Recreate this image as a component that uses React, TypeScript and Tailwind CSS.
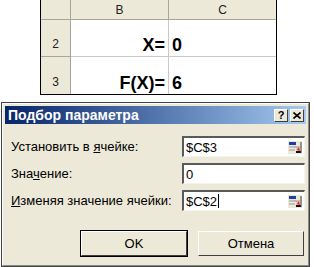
export default function App() {
  return (
    <div className="w-[314px] h-[267px] bg-white overflow-hidden font-['Liberation_Sans',Arial,sans-serif]">
      <Sheet />
      <ParamDialog />
    </div>
  );
}

function Sheet() {
  const head = "bg-[#ece9d8] border-r border-b border-[#a7a69b] text-[12px] text-[#222] flex";
  const cell = "border-r border-b border-[#c9c9c9] bg-white flex items-end pb-[2px] text-[18px] font-bold text-black leading-none";
  return (
    <div className="ml-[40px] w-[237px] border-l border-r border-b border-black grid grid-cols-[30px_98px_107px] grid-rows-[20px_37px_37px]">
      <div className={head}></div>
      <div className={head + " items-center justify-center"}>B</div>
      <div className={head + " items-center justify-center border-r-0"}>C</div>

      <div className={head + " items-end justify-center pb-[3px]"}>2</div>
      <div className={cell + " justify-end pr-[3px]"}>X=</div>
      <div className={cell + " pl-[3px] border-r-0"}>0</div>

      <div className={head + " items-end justify-center pb-[3px] border-b-0"}>3</div>
      <div className={cell + " justify-end pr-[3px] border-b-0"}>F(X)=</div>
      <div className={cell + " pl-[3px] border-r-0 border-b-0"}>6</div>
    </div>
  );
}

function RefIcon() {
  return (
    <svg width="14" height="13" viewBox="0 0 14 13" className="mr-[2px]">
      <rect x="0" y="0" width="14" height="13" fill="#ece9d8" />
      <rect x="1" y="1" width="7" height="3" fill="#1c3fa8" />
      <line x1="1" y1="6" x2="12" y2="6" stroke="#9a9a9a" />
      <line x1="1" y1="9" x2="7" y2="9" stroke="#9a9a9a" />
      <path d="M5 4 L10 8 L8 9 L12 10 L11 6 L10 7.5 Z" fill="#e0203a" />
      <rect x="8" y="10" width="5" height="2" fill="#111" />
      <line x1="13" y1="1" x2="13" y2="12" stroke="#404040" />
    </svg>
  );
}

function Field({ value, caret, icon }: { value: string; caret?: boolean; icon?: boolean }) {
  return (
    <div className="w-[123px] h-[21px] border-t-2 border-l-2 border-t-[#5a5a5a] border-l-[#5a5a5a] border-b border-r border-b-[#f4f3ee] border-r-[#f4f3ee] bg-white flex items-center">
      <span className="pl-[2px] text-[13px] text-black leading-none flex-1 flex items-center">
        {value}
        {caret && <span className="inline-block w-px h-[14px] bg-black ml-[1px]" />}
      </span>
      {icon && <RefIcon />}
    </div>
  );
}

function Btn({ label, def }: { label: string; def?: boolean }) {
  return (
    <div className={"w-[108px] h-[27px] border " + (def ? "border-black" : "border-[#ece9d8]")}>
      <div className="w-full h-full border-t border-l border-white border-b border-r border-b-[#404040] border-r-[#404040] bg-[#ece9d8] flex items-center justify-center text-[13px] text-black">
        {label}
      </div>
    </div>
  );
}

function ParamDialog() {
  return (
    <div className="mt-[7px] ml-[1px] w-[309px] h-[165px] border border-[#404040] bg-[#ece9d8]">
      <div className="h-full border-t border-l border-white border-r border-b border-r-[#8a8a8a] border-b-[#8a8a8a] p-[2px] flex flex-col">
        <div className="h-[18px] bg-gradient-to-r from-[#0a246a] to-[#a6caf0] flex items-center justify-between pl-[3px] pr-[2px]">
          <span className="text-white font-bold text-[14px] leading-none">Подбор параметра</span>
          <div className="flex gap-[2px]">
            <div className="w-[14px] h-[13px] bg-[#ece9d8] border border-t-white border-l-white border-b-[#404040] border-r-[#404040] flex items-center justify-center text-[11px] font-bold leading-none text-black">?</div>
            <div className="w-[14px] h-[13px] bg-[#ece9d8] border border-t-white border-l-white border-b-[#404040] border-r-[#404040] flex items-center justify-center">
              <svg width="8" height="7" viewBox="0 0 8 7">
                <path d="M0.5 0.5 L7.5 6.5 M7.5 0.5 L0.5 6.5" stroke="#000" strokeWidth="1.6" />
              </svg>
            </div>
          </div>
        </div>

        <div className="mt-[12px] flex flex-col gap-[6px] pl-[6px] pr-[1px] text-[13px] text-black">
          <div className="flex items-center justify-between">
            <span>Установить в <span className="underline">я</span>чейке:</span>
            <Field value="$C$3" icon />
          </div>
          <div className="flex items-center justify-between">
            <span>Зна<span className="underline">ч</span>ение:</span>
            <Field value="0" />
          </div>
          <div className="flex items-center justify-between">
            <span><span className="underline">И</span>зменяя значение ячейки:</span>
            <Field value="$C$2" caret icon />
          </div>
        </div>

        <div className="mt-[19px] flex justify-end gap-[9px] pr-[1px]">
          <Btn label="OK" def />
          <Btn label="Отмена" />
        </div>
      </div>
    </div>
  );
}
